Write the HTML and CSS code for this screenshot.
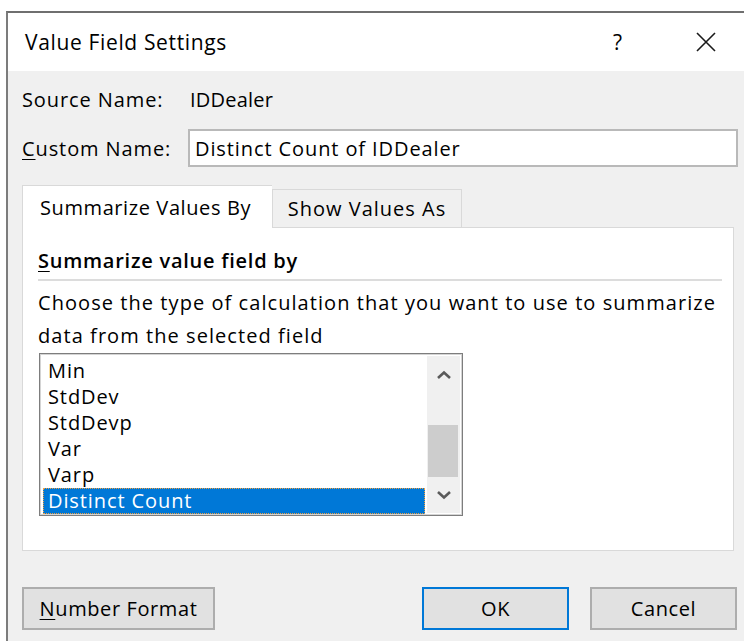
FILE: index.html
```html
<!DOCTYPE html>
<html lang="en">
<head>
<meta charset="utf-8">
<title>Value Field Settings</title>
<link rel="stylesheet" href="styles.css">
</head>
<body>
<div class="window">
  <div class="titlebar">
    <span class="title">Value Field Settings</span>
    <span class="help">?</span>
    <svg class="close" width="20" height="20" viewBox="0 0 20 20">
      <path d="M1 1 L19 19 M19 1 L1 19" stroke="#1a1a1a" stroke-width="1.6" fill="none"/>
    </svg>
  </div>
  <div class="content">
    <div class="row source">
      <span class="label">Source Name:</span>
      <span>IDDealer</span>
    </div>
    <div class="row custom">
      <span class="label"><u>C</u>ustom Name:</span>
      <div class="input">Distinct Count of IDDealer</div>
    </div>
    <div class="tabs">
      <div class="tab active">Summarize Values By</div>
      <div class="tab">Show Values As</div>
    </div>
    <div class="panel">
      <div class="heading"><u>S</u>ummarize value field by</div>
      <div class="rule"></div>
      <p class="desc">Choose the type of calculation that you want to use to summarize data from the selected field</p>
      <div class="listbox">
        <ul class="items">
          <li>Min</li>
          <li>StdDev</li>
          <li>StdDevp</li>
          <li>Var</li>
          <li>Varp</li>
          <li class="selected">Distinct Count</li>
        </ul>
        <div class="scrollbar">
          <div class="arrow up">
            <svg width="16" height="10" viewBox="0 0 16 10"><path d="M2 8 L8 2.5 L14 8" stroke="#5a5a5a" stroke-width="2.6" fill="none"/></svg>
          </div>
          <div class="track"><div class="thumb"></div></div>
          <div class="arrow down">
            <svg width="16" height="10" viewBox="0 0 16 10"><path d="M2 2 L8 7.5 L14 2" stroke="#5a5a5a" stroke-width="2.6" fill="none"/></svg>
          </div>
        </div>
      </div>
    </div>
    <div class="buttons">
      <button class="btn wide"><u>N</u>umber Format</button>
      <div class="right">
        <button class="btn default">OK</button>
        <button class="btn">Cancel</button>
      </div>
    </div>
  </div>
</div>
</body>
</html>
```

FILE: styles.css
```css
* { box-sizing: border-box; }

html, body {
  margin: 0;
  padding: 0;
  background: #ffffff;
  overflow: hidden;
}

body {
  font-family: "Open Sans", "Noto Sans", sans-serif;
  font-size: 20px;
  color: #000;
  width: 744px;
  height: 641px;
}

.window {
  margin: 11px 0 0 6px;
  width: 738px;
  height: 630px;
  border-top: 2px solid #6f6f6f;
  border-left: 2px solid #7c7c7c;
  display: flex;
  flex-direction: column;
}

.titlebar {
  height: 58px;
  flex: none;
  background: #fff;
  display: flex;
  align-items: center;
  padding-left: 17px;
}

.title {
  font-size: 21px;
  letter-spacing: 0.65px;
  flex: 1;
}

.help {
  font-size: 21px;
  margin-right: 74px;
}

.close {
  margin-right: 28px;
}

.content {
  flex: 1;
  background: #f0f0f0;
  padding: 14px 6px 0 14px;
  letter-spacing: 0.9px;
}

.row {
  display: flex;
  align-items: center;
}

.source {
  height: 28px;
}

.source .label {
  width: 168px;
}

.source span:last-child {
  letter-spacing: 0.2px;
}

.custom {
  margin-top: 16px;
}

.custom .label {
  width: 166px;
}

u {
  text-decoration-thickness: 1px;
  text-underline-offset: 3px;
}

.input {
  flex: 1;
  height: 38px;
  background: #fff;
  border: 2px solid #b9b9b9;
  padding-left: 5px;
  display: flex;
  align-items: center;
}

.tabs {
  display: flex;
  align-items: flex-end;
  margin-top: 18px;
  position: relative;
  z-index: 1;
}

.tab {
  width: 190px;
  height: 38px;
  border: 1px solid #d9d9d9;
  border-bottom: none;
  display: flex;
  align-items: center;
  justify-content: center;
  background: #f0f0f0;
  letter-spacing: 1px;
}

.tab.active {
  width: 250px;
  height: 43px;
  background: #fff;
  border-right: none;
  margin-bottom: -1px;
  letter-spacing: 0.6px;
  padding-right: 4px;
}

.panel {
  background: #fff;
  border: 1px solid #d9d9d9;
  height: 324px;
  margin-right: 4px;
  padding: 19px 11px 0 15px;
}

.heading {
  font-weight: 600;
  line-height: 28px;
  letter-spacing: 0.75px;
}

.rule {
  height: 2px;
  background: #dcdcdc;
  margin-top: 4px;
}

.desc {
  margin: 5px 0 0 0;
  line-height: 33px;
  letter-spacing: 1.06px;
}

.listbox {
  margin: 1px 0 0 1px;
  width: 424px;
  height: 163px;
  border: 1px solid #7d7d7d;
  box-shadow: inset 0 0 0 1px #d4d4d4;
  padding: 2px 2px 2px 3px;
  display: flex;
}

.items {
  list-style: none;
  margin: 0 2px 0 0;
  padding: 2px 0 0 0;
  flex: 1;
}

.items li {
  height: 26px;
  line-height: 26px;
  padding-left: 5px;
  letter-spacing: 0.9px;
}

.items li.selected {
  background: #0078d7;
  color: #fff;
  outline: 1px dotted #f0a040;
  outline-offset: -1px;
}

.scrollbar {
  width: 33px;
  background: #f0f0f0;
  display: flex;
  flex-direction: column;
}

.arrow {
  display: flex;
  align-items: center;
  justify-content: center;
}

.arrow.up { height: 40px; }
.arrow.down { height: 36px; flex: none; }

.track {
  flex: 1;
  padding: 31px 2px 0 1px;
}

.thumb {
  height: 52px;
  background: #cdcdcd;
}

.buttons {
  display: flex;
  justify-content: space-between;
  margin-top: 36px;
  margin-right: 1px;
}

.right {
  display: flex;
  gap: 21px;
}

.btn {
  font: inherit;
  letter-spacing: 0.6px;
  color: #000;
  width: 147px;
  height: 43px;
  background: #e1e1e1;
  border: 2px solid #adadad;
  padding: 0;
}

.btn.wide {
  width: 193px;
}

.btn.default {
  border-color: #0078d7;
}
```
